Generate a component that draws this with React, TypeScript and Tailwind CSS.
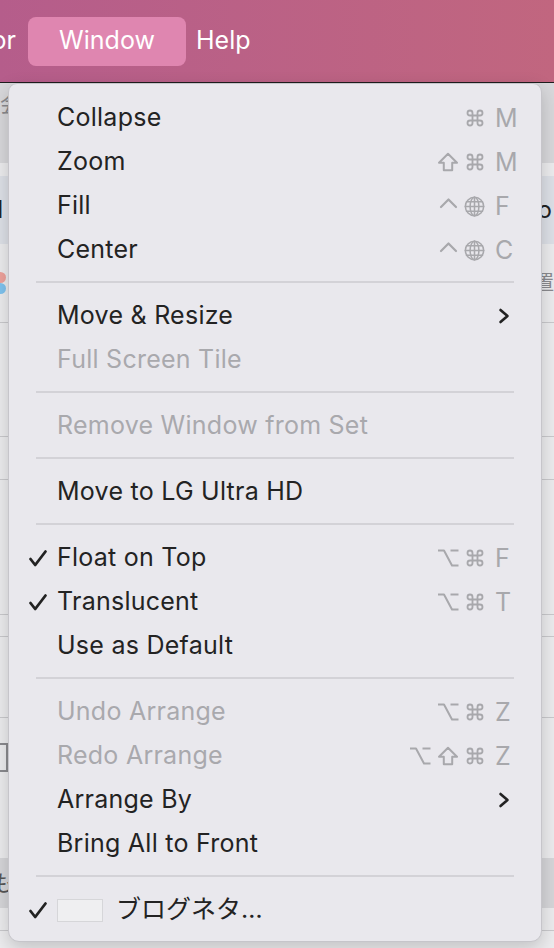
import type { ReactNode } from "react";

type Key = "cmd" | "shift" | "ctrl" | "globe" | "opt";

interface Item {
  label: string;
  disabled?: boolean;
  checked?: boolean;
  mods?: Key[];
  letter?: string;
  submenu?: boolean;
}

const groups: Item[][] = [
  [
    { label: "Collapse", mods: ["cmd"], letter: "M" },
    { label: "Zoom", mods: ["shift", "cmd"], letter: "M" },
    { label: "Fill", mods: ["ctrl", "globe"], letter: "F" },
    { label: "Center", mods: ["ctrl", "globe"], letter: "C" },
  ],
  [
    { label: "Move & Resize", submenu: true },
    { label: "Full Screen Tile", disabled: true },
  ],
  [{ label: "Remove Window from Set", disabled: true }],
  [{ label: "Move to LG Ultra HD" }],
  [
    { label: "Float on Top", checked: true, mods: ["opt", "cmd"], letter: "F" },
    { label: "Translucent", checked: true, mods: ["opt", "cmd"], letter: "T" },
    { label: "Use as Default" },
  ],
  [
    { label: "Undo Arrange", disabled: true, mods: ["opt", "cmd"], letter: "Z" },
    { label: "Redo Arrange", disabled: true, mods: ["opt", "shift", "cmd"], letter: "Z" },
    { label: "Arrange By", submenu: true },
    { label: "Bring All to Front" },
  ],
];

const font = '"Inter", "Noto Sans CJK JP", "Liberation Sans", sans-serif';

function KeyGlyph({ k }: { k: Key }) {
  const common = {
    fill: "none",
    stroke: "currentColor",
    strokeWidth: 2,
    strokeLinecap: "round" as const,
    strokeLinejoin: "round" as const,
  };
  if (k === "cmd") {
    return (
      <svg width="20" height="20" viewBox="0 0 24 24" {...common} strokeWidth={2.2}>
        <path d="M15 6v12a3 3 0 1 0 3-3H6a3 3 0 1 0 3 3V6a3 3 0 1 0-3 3h12a3 3 0 1 0-3-3" />
      </svg>
    );
  }
  if (k === "shift") {
    return (
      <svg width="22" height="20" viewBox="0 0 22 20" {...common}>
        <path d="M11 1.8 L20 10.8 H15.2 V18.2 H6.8 V10.8 H2 Z" />
      </svg>
    );
  }
  if (k === "opt") {
    return (
      <svg width="22" height="20" viewBox="0 0 22 20" {...common} strokeLinecap="butt">
        <path d="M1 2.5 H7 L15 17.5 H21.5" />
        <path d="M13.5 2.5 H21.5" />
      </svg>
    );
  }
  if (k === "ctrl") {
    return (
      <svg width="19" height="20" viewBox="0 0 19 20" {...common} strokeWidth={2.2}>
        <path d="M2 11 L9.5 3.5 L17 11" />
      </svg>
    );
  }
  return (
    <svg width="21" height="21" viewBox="0 0 22 22" {...common} strokeWidth={1.6}>
      <circle cx="11" cy="11" r="9.6" />
      <ellipse cx="11" cy="11" rx="4.6" ry="9.6" />
      <path d="M11 1.4 V20.6 M1.4 11 H20.6 M2.6 6 H19.4 M2.6 16 H19.4" />
    </svg>
  );
}

function Check() {
  return (
    <svg width="20" height="19" viewBox="0 0 20 19" fill="none" stroke="#222222" strokeWidth={2.8} strokeLinecap="round" strokeLinejoin="round">
      <path d="M2.5 10 L7.2 16 L17.5 2.5" />
    </svg>
  );
}

function Row({ checked, children, right }: { checked?: boolean; children: ReactNode; right?: ReactNode }) {
  return (
    <div className="flex h-[44px] items-center pl-[19px] pr-[26px]">
      <div className="flex w-[29px] items-center">{checked && <Check />}</div>
      <div className="flex flex-1 items-center">{children}</div>
      {right}
    </div>
  );
}

function MenuRow({ item }: { item: Item }) {
  let right: ReactNode = null;
  if (item.letter) {
    right = (
      <div className="flex items-center text-[#a8a8ac]">
        <div className="flex items-center gap-[6px]">
          {item.mods?.map((m, i) => (
            <KeyGlyph key={i} k={m} />
          ))}
        </div>
        <span className="ml-[10px] w-[20px] text-[25px] leading-none">{item.letter}</span>
      </div>
    );
  } else if (item.submenu) {
    right = (
      <div className="flex w-[20px] pl-[3px]">
        <svg width="12" height="16" viewBox="0 0 12 16" fill="none" stroke="#222222" strokeWidth={2.6} strokeLinecap="round" strokeLinejoin="round">
          <path d="M2.5 2 L9.5 8 L2.5 14" />
        </svg>
      </div>
    );
  }
  return (
    <Row checked={item.checked} right={right}>
      <span
        className={
          item.disabled
            ? "text-[25px] tracking-[0.01em] text-[#a9a9ad]"
            : "text-[25px] tracking-[0.01em] text-[#232323]"
        }
      >
        {item.label}
      </span>
    </Row>
  );
}

function Separator() {
  return (
    <div className="flex h-[22px] items-center px-[27px]">
      <div className="mt-[-2px] h-[2px] w-full bg-[#d3d2d7]" />
    </div>
  );
}

function Backdrop() {
  return (
    <div className="flex flex-col">
      <div className="h-[80px] bg-[#d8d8db] pt-[10px] text-[22px] leading-none text-[#8a8a8e]">会</div>
      <div className="h-[13px] bg-[#ececee]" />
      <div className="flex h-[68px] items-center justify-between bg-[#dde0e7] pr-[2px] text-[24px] text-[#222222]">
        <span className="ml-[-10px]">.I</span>
        <span>o</span>
      </div>
      <div className="flex h-[79px] items-center justify-between border-b border-[#c9c9cc] bg-[#ececee]">
        <div className="ml-[-6px] flex flex-col">
          <div className="h-[11px] w-[12px] rounded-full bg-[#eea29c]" />
          <div className="h-[11px] w-[12px] rounded-full bg-[#7fc3ef]" />
        </div>
        <span className="text-[20px] text-[#8a8a8e]">置</span>
      </div>
      <div className="h-[114px] border-b border-[#c9c9cc] bg-[#ececee]" />
      <div className="h-[43px] border-b border-[#c9c9cc] bg-[#ececee]" />
      <div className="h-[135px] border-b border-[#c9c9cc] bg-[#ececee]" />
      <div className="h-[22px] border-b border-[#c9c9cc] bg-[#ececee]" />
      <div className="h-[81px] border-b border-[#c9c9cc] bg-[#ececee]" />
      <div className="h-[140px] bg-[#ececee] pt-[25px]">
        <div className="ml-[-4px] h-[29px] w-[12px] border-2 border-[#8a8a8e]" />
      </div>
      <div className="flex h-[50px] items-center bg-[#d6d6d9] text-[22px] text-[#555555]">
        <span className="ml-[-8px]">も</span>
      </div>
      <div className="h-[23px] border-b border-[#c9c9cc] bg-[#ececee]" />
      <div className="h-[40px] bg-[#ececee]" />
    </div>
  );
}

export default function App() {
  return (
    <div className="relative h-[948px] w-[554px] overflow-hidden bg-[#ececee]" style={{ fontFamily: font }}>
      <div className="flex h-[82px] items-center bg-gradient-to-r from-[#b55d8b] to-[#c1667f] text-[25px] text-white">
        <div className="flex w-[16px] justify-end overflow-hidden whitespace-nowrap">
          <span>Editor</span>
        </div>
        <div className="ml-[12px] flex h-[49px] w-[158px] items-center justify-center rounded-[8px] bg-[#df86b0]">
          Window
        </div>
        <span className="ml-[10px]">Help</span>
      </div>
      <div className="h-[1px] bg-[#1e1e1e]" />
      <Backdrop />

      <div className="absolute left-[8px] top-[83px] w-[534px] rounded-b-[11px] rounded-t-[9px] border border-[#c6c5ca] bg-[#e9e8ed] pb-[9px] pt-[12px] shadow-[0_6px_18px_rgba(0,0,0,0.18)]">
        {groups.map((group, gi) => (
          <div key={gi}>
            {group.map((item) => (
              <MenuRow key={item.label} item={item} />
            ))}
            <Separator />
          </div>
        ))}
        <Row checked>
          <div className="h-[23px] w-[46px] border border-[#d6d6d9] bg-[#efeff1]" />
          <span className="ml-[13px] text-[25px] text-[#232323]">ブログネタ…</span>
        </Row>
      </div>
    </div>
  );
}
